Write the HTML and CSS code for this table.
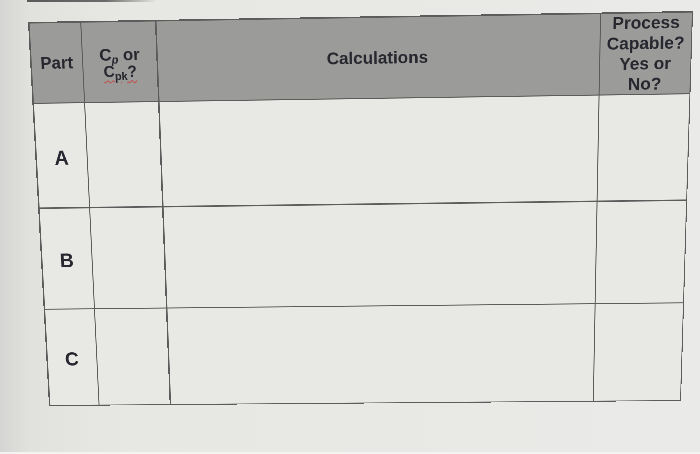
FILE: index.html
```html
<!DOCTYPE html>
<html lang="en">
<head>
<meta charset="utf-8">
<title>Process capability table</title>
<link rel="stylesheet" href="styles.css">
</head>
<body>
<div class="prev-edge"></div>
<div class="sheet">
  <div class="grid">
    <div class="cell head">Part</div>
    <div class="cell head cp">
      <span class="line">C<sub class="p">p</sub> or</span>
      <span class="line second"><span class="spell">C<sub>pk</sub>?</span></span>
    </div>
    <div class="cell head">Calculations</div>
    <div class="cell head proc">Process<br>Capable?<br>Yes or<br>No?</div>

    <div class="cell letter">A</div>
    <div class="cell"></div>
    <div class="cell"></div>
    <div class="cell"></div>

    <div class="cell letter">B</div>
    <div class="cell"></div>
    <div class="cell"></div>
    <div class="cell"></div>

    <div class="cell letter">C</div>
    <div class="cell"></div>
    <div class="cell"></div>
    <div class="cell"></div>
  </div>
</div>
<div class="bottom-strip"></div>
</body>
</html>
```

FILE: styles.css
```css
html, body {
  margin: 0;
  padding: 0;
}

body {
  width: 700px;
  height: 454px;
  overflow: hidden;
  display: flex;
  flex-direction: column;
  background: linear-gradient(90deg, #d5d5d3 0px, #e1e1de 30px, #e7e7e4 120px, #eaeae8 100%);
  font-family: "Liberation Sans", Arial, sans-serif;
  color: #27272f;
}

.prev-edge {
  margin-left: 27px;
  width: 130px;
  height: 2px;
  background: linear-gradient(90deg, #5a5a5a, #6a6a6a 60%, rgba(110, 110, 110, 0));
  flex: none;
}

/* layout box of the photographed sheet */
.sheet {
  margin: 20px 0 0 28px;
  width: 660px;
  height: 388px;
  flex: none;
}

/* drawn at 2x, then mapped onto the photo's perspective quad */
.grid {
  box-sizing: border-box;
  width: 1320px;
  height: 776px;
  display: grid;
  grid-template-columns: 102px 148px 880px 1fr;
  grid-template-rows: 154px 206px 204px 1fr;
  gap: 2.5px;
  padding: 2.5px;
  background: #5c5c5c;
  transform-origin: 0 0;
  transform: matrix3d(0.4963725, -0.0082105, 0, -0.00001115,
                      0.028468, 0.520545, 0, 0.00006693,
                      0, 0, 1, 0,
                      0, 0, 0, 1);
}

.cell {
  background: #e8e8e5;
  display: flex;
  align-items: center;
  justify-content: center;
  text-align: center;
  font-weight: bold;
}

.head {
  background: #9b9b99;
  font-size: 34px;
  line-height: 39px;
}

.cp {
  flex-direction: column;
  line-height: 34px;
  padding-top: 4px;
}

.cp .line {
  display: block;
}

.cp sub {
  font-size: 22px;
  line-height: 0;
  vertical-align: -6px;
}

.cp .p {
  font-style: italic;
}

.cp .second {
  font-size: 31px;
}

.spell {
  text-decoration: underline wavy #c0504d;
  text-decoration-thickness: 2px;
  text-underline-offset: 6px;
}

.proc {
  padding-bottom: 2px;
}

.letter {
  font-size: 40px;
  padding-top: 8px;
}

.bottom-strip {
  margin-top: auto;
  height: 2px;
  background: #f3f3f2;
  flex: none;
}
```
